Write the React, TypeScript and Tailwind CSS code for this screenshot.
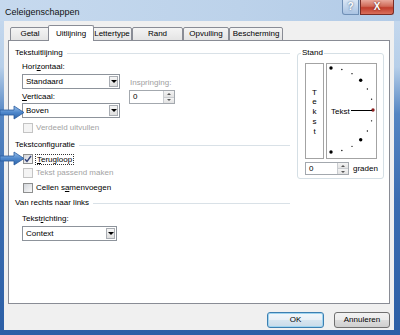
import type { ReactNode } from 'react'

const dots = [90, 75, 60, 45, 30, 15, 0, -15, -30, -45, -60, -75, -90]

function Heading({ children }: { children: ReactNode }) {
  return (
    <div className="flex h-[10px] items-center">
      <span>{children}</span>
      <div className="ml-[4px] h-px flex-1 bg-[#d9e1e7]" />
    </div>
  )
}

function Select({ value, className }: { value: string; className: string }) {
  return (
    <div className={`flex h-[15px] items-stretch border border-[#8d939b] bg-white ${className}`}>
      <div className="flex flex-1 items-center pl-[3px]">{value}</div>
      <div className="m-px flex w-[9px] items-center justify-center border border-[#a9adb3] bg-[linear-gradient(#f6f6f6,#dedede)]">
        <div className="h-0 w-0 border-x-[3px] border-t-[3px] border-x-transparent border-t-black" />
      </div>
    </div>
  )
}

function Spin({ className }: { className: string }) {
  return (
    <div className={`flex items-stretch border border-[#a3a8ae] bg-white ${className}`}>
      <div className="flex flex-1 items-center pl-[3px]">0</div>
      <div className="flex w-[11px] flex-col border-l border-[#c9ccd0]">
        <div className="flex flex-1 items-center justify-center border-b border-[#c9ccd0] bg-[linear-gradient(#f4f4f4,#e2e2e2)]">
          <div className="h-0 w-0 border-x-[2px] border-b-[2px] border-x-transparent border-b-[#555]" />
        </div>
        <div className="flex flex-1 items-center justify-center bg-[linear-gradient(#f4f4f4,#e2e2e2)]">
          <div className="h-0 w-0 border-x-[2px] border-t-[2px] border-x-transparent border-t-[#555]" />
        </div>
      </div>
    </div>
  )
}

function Check({ children, checked, disabled, focus }: { children: ReactNode; checked?: boolean; disabled?: boolean; focus?: boolean }) {
  return (
    <div className="flex h-[10px] items-center pl-[8px]">
      <div
        className={`flex h-[10px] w-[10px] items-center justify-center border ${
          disabled ? 'border-[#c4c4c4] bg-[#f4f4f4]' : 'border-[#8e8f8f] bg-[linear-gradient(135deg,#d2d5da,#fafafa)]'
        }`}
      >
        {checked ? (
          <svg width="8" height="8" viewBox="0 0 8 8">
            <path d="M1 4.2 L3 6.5 L7 1" fill="none" stroke="#33437a" strokeWidth="1.4" />
          </svg>
        ) : null}
      </div>
      <span
        className={`ml-[2px] ${disabled ? 'text-[#a3a3a3]' : ''} ${
          focus ? 'border border-dotted border-[#333] px-[1px] leading-[9px]' : 'pl-[1px]'
        }`}
      >
        {children}
      </span>
    </div>
  )
}

function Tab({ label, className, active }: { label: string; className: string; active?: boolean }) {
  if (active) {
    return (
      <div className={`relative z-10 -mx-[2px] flex h-[16px] justify-center rounded-t-[2px] border border-b-0 border-[#898c95] bg-white pt-[3px] ${className}`}>
        {label}
      </div>
    )
  }
  return (
    <div className={`flex h-[14px] items-center justify-center rounded-t-[2px] border border-[#898c95] bg-[linear-gradient(#f4f4f4,#e4e4e4)] ${className}`}>
      {label}
    </div>
  )
}

function Arrow({ className }: { className: string }) {
  return (
    <svg className={`absolute left-0 ${className}`} width="26" height="15" viewBox="0 0 26 15">
      <defs>
        <linearGradient id="ag" x1="0" y1="0" x2="0" y2="1">
          <stop offset="0" stopColor="#9cc2ec" />
          <stop offset="0.5" stopColor="#4f88cc" />
          <stop offset="1" stopColor="#2d63a8" />
        </linearGradient>
      </defs>
      <path d="M0 5 L14 5 L14 1 L24 7.5 L14 14 L14 10 L0 10 Z" fill="url(#ag)" stroke="#2a5c9e" strokeWidth="0.8" />
    </svg>
  )
}

export default function App() {
  return (
    <div className="relative flex h-[335px] w-[400px] flex-col overflow-hidden bg-[linear-gradient(180deg,#c9dbef_0%,#b7cfe9_20%,#5586c3_34%,#3b6db1_60%,#2c5fa6_100%)] font-['Liberation_Sans',Arial,sans-serif] text-[8px] leading-[10px] text-black">
      <div className="flex h-[21px] shrink-0 items-start bg-[linear-gradient(90deg,#c6d9ee,#bcd2ea_60%,#b2cbe7)]">
        <div className="pl-[5px] pt-[7px] text-[9px] text-[#111]">Celeigenschappen</div>
        <div className="ml-auto mr-[6px] flex gap-[1px]">
          <div className="flex h-[15px] w-[17px] items-center justify-center rounded-bl-[3px] border border-t-0 border-[#6f8fb5] bg-[linear-gradient(#d9e6f4,#a9c3e2)] text-[10px] font-bold text-white [text-shadow:0_0_2px_#2b4a70]">
            ?
          </div>
          <div className="flex h-[15px] w-[34px] items-center justify-center rounded-br-[3px] border border-t-0 border-[#7a2d26] bg-[linear-gradient(#e9a99c,#d06a58_45%,#c03d2c_55%,#d96f5c)] text-[10px] font-bold text-white [text-shadow:0_0_2px_#5a1a12]">
            X
          </div>
        </div>
      </div>

      <div className="flex flex-1">
        <div className="w-[4px]" />
        <div className="flex h-[309px] w-[390px] flex-col bg-[#f0f0f0] px-[4px] pt-[4px]">
          <div className="relative z-10 flex h-[16px] items-end pl-[2px]">
            <Tab label="Getal" className="w-[40px]" />
            <Tab label="Uitlijning" className="w-[46px]" active />
            <Tab label="Lettertype" className="w-[40px]" />
            <Tab label="Rand" className="w-[51px]" />
            <Tab label="Opvulling" className="w-[46px]" />
            <Tab label="Bescherming" className="w-[54px]" />
          </div>

          <div className="-mt-px flex h-[264px] items-start border border-[#898c95] bg-white pl-[6px] pt-[7px]">
            <div className="w-[275px]">
              <Heading>Tekstuitlijning</Heading>
              <div className="mt-[4px] flex pl-[7px]">
                <div className="w-[98px]">
                  <div>
                    Hori<span className="underline">z</span>ontaal:
                  </div>
                  <Select value="Standaard" className="mt-[2px] w-[98px]" />
                  <div className="mt-[3px]">
                    <span className="underline">V</span>erticaal:
                  </div>
                  <Select value="Boven" className="mt-[1px] w-[98px]" />
                </div>
                <div className="ml-[9px] pt-[16px]">
                  <div className="pl-[1px] text-[#a0a0a0]">Inspringing:</div>
                  <Spin className="mt-[2px] h-[14px] w-[46px]" />
                </div>
              </div>
              <div className="mt-[5px]">
                <Check disabled>Verdeeld uitvullen</Check>
              </div>

              <div className="mt-[7px]">
                <Heading>Tekstconfiguratie</Heading>
              </div>
              <div className="mt-[4px]">
                <Check checked focus>
                  <span className="underline">T</span>erugloop
                </Check>
              </div>
              <div className="mt-[4px]">
                <Check disabled>Tekst passend maken</Check>
              </div>
              <div className="mt-[5px]">
                <Check>
                  Cellen s<span className="underline">a</span>menvoegen
                </Check>
              </div>

              <div className="mt-[5px]">
                <Heading>Van rechts naar links</Heading>
              </div>
              <div className="mt-[6px] pl-[7px]">
                <div>
                  Tekst<span className="underline">r</span>ichting:
                </div>
                <Select value="Context" className="mt-[2px] w-[95px]" />
              </div>
            </div>

            <fieldset className="ml-[7px] w-[86px] rounded-[3px] border border-[#d5dfe5] pb-[3px] pl-[7px] pr-[5px]">
              <legend className="-ml-[4px] px-[1px]">Stand</legend>
              <div className="mt-[5px] flex gap-[2px]">
                <div className="flex h-[96px] w-[19px] flex-col items-center justify-center border border-[#a3a3a3] pt-[2px] leading-[9.7px]">
                  <span>T</span>
                  <span>e</span>
                  <span>k</span>
                  <span>s</span>
                  <span>t</span>
                </div>
                <div className="h-[96px] w-[51px] border border-[#a3a3a3]">
                  <svg width="49" height="94" viewBox="0 0 49 94">
                    {dots.map((a) => {
                      const r = (a * Math.PI) / 180
                      const big = a % 45 === 0
                      return (
                        <circle
                          key={a}
                          cx={4 + 42 * Math.cos(r)}
                          cy={46 - 42 * Math.sin(r)}
                          r={big ? 1.7 : 0.7}
                          fill={a === 0 ? '#8a1c1c' : '#000'}
                        />
                      )
                    })}
                    <text x="4" y="49.5" fontSize="8" fontFamily="Liberation Sans, Arial, sans-serif" fill="#000">
                      Tekst
                    </text>
                    <line x1="24" y1="46.5" x2="45" y2="46.5" stroke="#000" strokeWidth="1" />
                  </svg>
                </div>
              </div>
              <div className="mt-[3px] flex items-center">
                <Spin className="h-[13px] w-[44px]" />
                <span className="ml-[4px]">graden</span>
              </div>
            </fieldset>
          </div>

          <div className="flex justify-end gap-[10px] pt-[8px]">
            <div className="flex h-[16px] w-[57px] items-center justify-center rounded-[3px] border border-[#3c7fb1] bg-[linear-gradient(#f2f7fb_0%,#e8f0f7_50%,#d7e5f0_50%,#c9dbe9_100%)] shadow-[inset_0_0_0_1px_#9fd4f0]">
              OK
            </div>
            <div className="flex h-[16px] w-[56px] items-center justify-center rounded-[3px] border border-[#707070] bg-[linear-gradient(#f2f2f2_0%,#ebebeb_50%,#dddddd_50%,#cfcfcf_100%)]">
              Annuleren
            </div>
          </div>
        </div>
      </div>
      <div className="h-[5px] shrink-0" />

      <Arrow className="top-[105px]" />
      <Arrow className="top-[151px]" />
    </div>
  )
}
